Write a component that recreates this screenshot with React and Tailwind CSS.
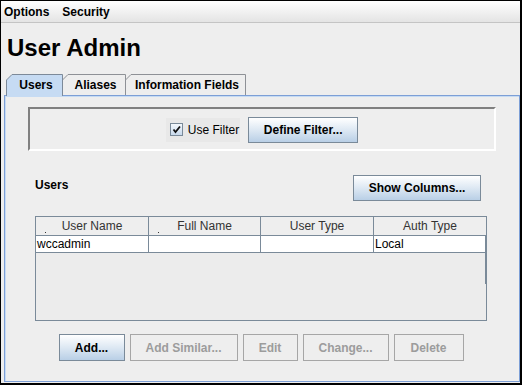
import React from "react"

const tabs = [
	{ label: "Users", w: 57, active: true },
	{ label: "Aliases", w: 64 },
	{ label: "Information Fields", w: 121 },
]

const columns = ["User Name", "Full Name", "User Type", "Auth Type"]

const Tab = ({ label, w, active }) => (
	<div className={"relative flex items-center justify-center -mr-[1px] " + (active ? "z-10 h-[22px] pb-[1px]" : "h-[21px]")} style={{ width: w }}>
		<svg className="absolute inset-0" width={w} height={active ? 22 : 21}>
			<path
				d={`M0.5 ${active ? 22 : 21} V6 L6 0.5 H${w - 0.5} V${active ? 22 : 21}`}
				fill={active ? "#c6dbf3" : "#eeeeee"}
				stroke={active ? "#7d8a99" : "#8e9196"}
			/>
		</svg>
		<span className="relative text-[12px] font-bold text-black pl-[3px]">{label}</span>
	</div>
)

const Btn = ({ children, className = "", disabled }) => (
	<div
		className={
			"flex items-center justify-center text-[12px] font-bold border " +
			(disabled
				? "border-[#a6a6a6] bg-[#eeeeee] text-[#9c9c9c] "
				: "border-[#7a8a99] bg-gradient-to-b from-[#ffffff] via-[#dde8f3] to-[#b9cfe6] text-black ") +
			className
		}
	>
		{children}
	</div>
)

const App = () => {
	return (
		<div className="w-[522px] h-[385px] flex flex-col overflow-hidden border-l border-t border-r-2 border-b-2 border-black bg-[#eeeeee] font-['Liberation_Sans',Arial,sans-serif]">
			{/* menu bar */}
			<div className="h-[22px] shrink-0 flex items-center gap-[13px] pl-[3px] bg-gradient-to-b from-[#ffffff] to-[#e4e4e4] border-b border-[#c4c4c4] text-[12px] font-bold text-black">
				<span>Options</span>
				<span>Security</span>
			</div>

			<div className="mt-[11px] pl-[6px] text-[24px] leading-[28px] font-bold text-black">User Admin</div>

			{/* tabs */}
			<div className="mt-[12px] h-[21px] shrink-0 flex items-start pl-[5px]">
				{tabs.map((t) => (
					<Tab key={t.label} {...t} />
				))}
			</div>

			{/* tab panel */}
			<div className="flex-1 ml-[3px] mb-[1px] border border-[#7d9fd6] shadow-[inset_1px_1px_0_#c6dbf3] flex flex-col">
				<div className="mt-[11px] mx-[23px] h-[44px] flex items-center justify-center gap-[8px] border-2 border-t-[#808080] border-l-[#808080] border-b-white border-r-white">
					<div className="flex items-center gap-[5px] h-[24px] pl-[4px] pr-[1px] bg-[#e8e8e8] mt-[1px]">
						<div className="w-[13px] h-[13px] border border-[#7a8a99] bg-gradient-to-b from-[#f4f8fc] to-[#c8d9ec] flex items-center justify-center">
							<svg width="9" height="9" viewBox="0 0 9 9">
								<path d="M1.5 4.5 L3.5 7 L8 1.5" fill="none" stroke="#111" strokeWidth="1.8" />
							</svg>
						</div>
						<span className="text-[12px] text-black">Use Filter</span>
					</div>
					<Btn className="w-[110px] h-[26px] mt-[1px]">Define Filter...</Btn>
				</div>

				<div className="mt-[24px] ml-[30px] mr-[38px] flex items-center justify-between">
					<span className="text-[12px] font-bold text-black -mt-[6px]">Users</span>
					<Btn className="w-[128px] h-[26px]">Show Columns...</Btn>
				</div>

				{/* table */}
				<div className="mt-[15px] ml-[30px] w-[452px] h-[105px] border border-[#7a8a99] bg-[#ececec] flex flex-col relative">
					<div className="grid grid-cols-[113px_112px_113px_112px] h-[19px] border-b border-[#7a8a99] bg-[#eeeeee]">
						{columns.map((c, i) => (
							<div
								key={c}
								className={"relative flex items-center justify-center text-[12px] text-[#333] " + (i < 3 ? "border-r border-[#7a8a99]" : "")}
							>
								{i < 2 && <span className="absolute left-[9px] bottom-[2px] w-[1px] h-[1px] bg-[#333]" />}
								{c}
							</div>
						))}
					</div>
					<div className="grid grid-cols-[113px_112px_113px_112px] h-[17px] border-b border-[#7a8a99] bg-white text-[12px] text-black leading-[16px]">
						<div className="border-r border-[#7a8a99] pl-[1px]">wccadmin</div>
						<div className="border-r border-[#7a8a99]" />
						<div className="border-r border-[#7a8a99]" />
						<div className="pl-[1px]">Local</div>
					</div>
					<div className="absolute right-[-1px] top-[19px] w-[2px] h-[48px] bg-[#7a8a99]" />
				</div>

				{/* buttons */}
				<div className="mt-[13px] flex justify-center gap-[5px] pr-[2px]">
					<Btn className="w-[66px] h-[27px]">Add...</Btn>
					<Btn className="w-[108px] h-[27px]" disabled>Add Similar...</Btn>
					<Btn className="w-[55px] h-[27px]" disabled>Edit</Btn>
					<Btn className="w-[86px] h-[27px]" disabled>Change...</Btn>
					<Btn className="w-[70px] h-[27px]" disabled>Delete</Btn>
				</div>
			</div>
		</div>
	)
}

export default App
